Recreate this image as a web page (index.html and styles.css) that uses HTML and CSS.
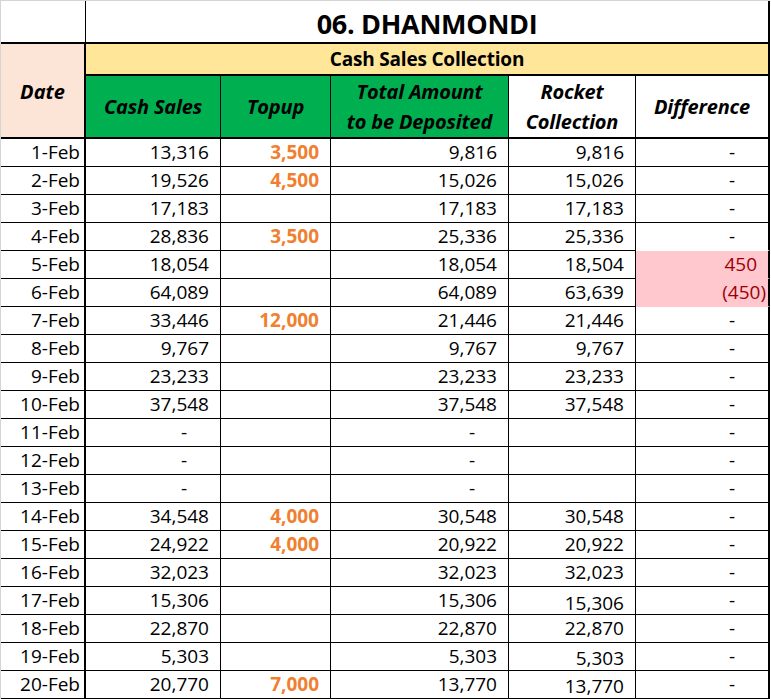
FILE: index.html
```html
<!DOCTYPE html>
<html>
<head>
<meta charset="utf-8">
<link rel="stylesheet" href="styles.css">
</head>
<body>
<div class="sheet">
  <div class="c blank-top"></div>
  <div class="c title">06. DHANMONDI</div>
  <div class="c date-h">Date</div>
  <div class="c band">Cash Sales Collection</div>
  <div class="c h green">Cash Sales</div>
  <div class="c h green">Topup</div>
  <div class="c h green">Total Amount<br>to be Deposited</div>
  <div class="c h">Rocket<br>Collection</div>
  <div class="c h last">Difference</div>

  <div class="c d">1-Feb</div><div class="c n">13,316</div><div class="c n o">3,500</div><div class="c n">9,816</div><div class="c n">9,816</div><div class="c n z last">-</div>
  <div class="c d">2-Feb</div><div class="c n">19,526</div><div class="c n o">4,500</div><div class="c n">15,026</div><div class="c n">15,026</div><div class="c n z last">-</div>
  <div class="c d">3-Feb</div><div class="c n">17,183</div><div class="c n o"></div><div class="c n">17,183</div><div class="c n">17,183</div><div class="c n z last">-</div>
  <div class="c d">4-Feb</div><div class="c n">28,836</div><div class="c n o">3,500</div><div class="c n">25,336</div><div class="c n">25,336</div><div class="c n z last nob">-</div>
  <div class="c d">5-Feb</div><div class="c n">18,054</div><div class="c n o"></div><div class="c n">18,054</div><div class="c n">18,504</div><div class="c n last bad nob">450</div>
  <div class="c d">6-Feb</div><div class="c n">64,089</div><div class="c n o"></div><div class="c n">64,089</div><div class="c n">63,639</div><div class="c n last bad neg nob">(450)</div>
  <div class="c d">7-Feb</div><div class="c n">33,446</div><div class="c n o">12,000</div><div class="c n">21,446</div><div class="c n">21,446</div><div class="c n z last">-</div>
  <div class="c d">8-Feb</div><div class="c n">9,767</div><div class="c n o"></div><div class="c n">9,767</div><div class="c n">9,767</div><div class="c n z last">-</div>
  <div class="c d">9-Feb</div><div class="c n">23,233</div><div class="c n o"></div><div class="c n">23,233</div><div class="c n">23,233</div><div class="c n z last">-</div>
  <div class="c d">10-Feb</div><div class="c n">37,548</div><div class="c n o"></div><div class="c n">37,548</div><div class="c n">37,548</div><div class="c n z last">-</div>
  <div class="c d">11-Feb</div><div class="c n z">-</div><div class="c n o"></div><div class="c n z">-</div><div class="c n"></div><div class="c n z last">-</div>
  <div class="c d">12-Feb</div><div class="c n z">-</div><div class="c n o"></div><div class="c n z">-</div><div class="c n"></div><div class="c n z last">-</div>
  <div class="c d">13-Feb</div><div class="c n z">-</div><div class="c n o"></div><div class="c n z">-</div><div class="c n"></div><div class="c n z last">-</div>
  <div class="c d">14-Feb</div><div class="c n">34,548</div><div class="c n o">4,000</div><div class="c n">30,548</div><div class="c n">30,548</div><div class="c n z last">-</div>
  <div class="c d">15-Feb</div><div class="c n">24,922</div><div class="c n o">4,000</div><div class="c n">20,922</div><div class="c n">20,922</div><div class="c n z last">-</div>
  <div class="c d">16-Feb</div><div class="c n">32,023</div><div class="c n o"></div><div class="c n">32,023</div><div class="c n">32,023</div><div class="c n z last">-</div>
  <div class="c d">17-Feb</div><div class="c n">15,306</div><div class="c n o"></div><div class="c n">15,306</div><div class="c n low3">15,306</div><div class="c n z last">-</div>
  <div class="c d">18-Feb</div><div class="c n">22,870</div><div class="c n o"></div><div class="c n">22,870</div><div class="c n">22,870</div><div class="c n z last">-</div>
  <div class="c d">19-Feb</div><div class="c n">5,303</div><div class="c n o"></div><div class="c n">5,303</div><div class="c n low2">5,303</div><div class="c n z last">-</div>
  <div class="c d">20-Feb</div><div class="c n">20,770</div><div class="c n o">7,000</div><div class="c n">13,770</div><div class="c n low2">13,770</div><div class="c n z last">-</div>
</div>
</body>
</html>
```

FILE: styles.css
```css
html, body {
  margin: 0;
  padding: 0;
  background: #ffffff;
}

.sheet {
  display: grid;
  grid-template-columns: 85px 135px 110px 178px 127px 134px;
  grid-template-rows: 43px 32px 63px repeat(20, 28px);
  width: max-content;
  border-top: 1px solid #d4d4d4;
  border-left: 1px solid #d4d4d4;
  font-family: "Open Sans", "Liberation Sans", sans-serif;
  color: #000;
}

.c {
  box-sizing: border-box;
  border-right: 1px solid #000;
  border-bottom: 1px solid #000;
  white-space: nowrap;
  overflow: visible;
}

.blank-top {
  border-bottom: 2px solid #000;
}

.title {
  grid-column: 2 / 7;
  border-right: 2px solid #000;
  border-bottom: 2px solid #000;
  display: flex;
  align-items: center;
  justify-content: center;
  padding-top: 3px;
  font-size: 27px;
  font-weight: 700;
  letter-spacing: -0.3px;
}

.date-h {
  grid-column: 1;
  grid-row: 2 / 4;
  background: #fce4d6;
  border-right: 2px solid #000;
  border-bottom: 2px solid #000;
  display: flex;
  align-items: center;
  justify-content: center;
  padding-top: 2px;
  font-size: 20px;
  font-weight: 700;
  font-style: italic;
}

.band {
  grid-column: 2 / 7;
  background: #ffe699;
  border-right: 2px solid #000;
  border-bottom: 2px solid #000;
  display: flex;
  align-items: center;
  justify-content: center;
  font-size: 19px;
  font-weight: 700;
  letter-spacing: -0.2px;
}

.h {
  border-bottom: 2px solid #000;
  display: flex;
  align-items: center;
  justify-content: center;
  text-align: center;
  font-size: 20px;
  line-height: 30px;
  font-weight: 700;
  font-style: italic;
  letter-spacing: -0.2px;
}

.green {
  background: #00b050;
}

.last {
  border-right: 2px solid #000;
}

.d {
  border-right: 2px solid #000;
  text-align: right;
  padding-right: 4px;
  font-size: 19px;
  line-height: 27px;
}

.n {
  text-align: right;
  padding-right: 11px;
  font-size: 19px;
  line-height: 27px;
}

.z {
  padding-right: 33px;
}

.o {
  color: #f07f30;
  font-weight: 700;
}

.bad {
  background: #ffc7ce;
  color: #9c0006;
}

.neg {
  padding-right: 2px;
}

.nob {
  border-bottom-color: transparent;
}

.low3 {
  padding-top: 3px;
}

.low2 {
  padding-top: 2px;
}
```
